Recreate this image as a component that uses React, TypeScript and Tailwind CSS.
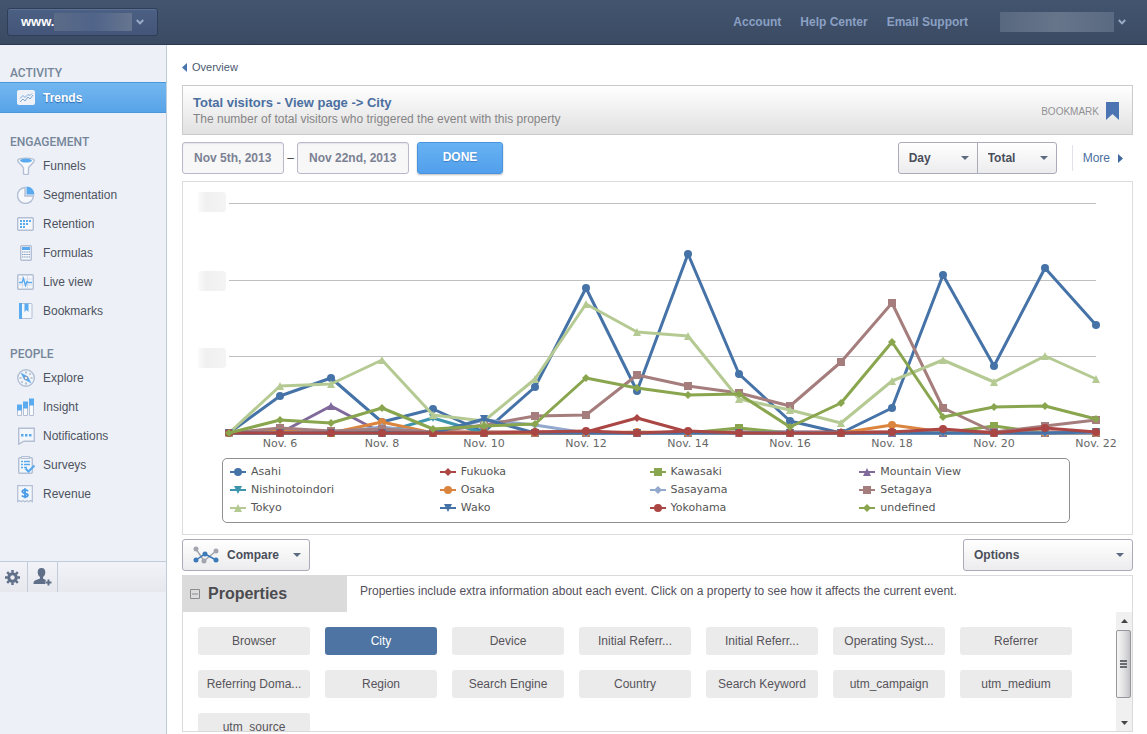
import React, { useState } from 'react'
import clsx from 'clsx'

type MarkerShape = 'circle' | 'diamond' | 'square' | 'triangle' | 'triangle-down'

interface Series {
  name: string
  color: string
  marker: MarkerShape
  values: number[]
}

const BASELINE = 251
const START_X = 46
const STEP_X = 51
const BLUE = '#4572A7'
const RED = '#AA4643'
const GREEN = '#89A54E'

const SERIES: Series[] = [
  { name: 'Asahi', color: BLUE, marker: 'circle', values: [0, 37, 55, 11, 24, 1, 46, 145, 42, 179, 59, 12, 0, 25, 158, 67, 165, 108] },
  { name: 'Fukuoka', color: RED, marker: 'diamond', values: [0, 1, 1, 1, 1, 1, 1, 1, 15, 1, 1, 1, 1, 1, 1, 1, 1, 1] },
  { name: 'Kawasaki', color: GREEN, marker: 'square', values: [0, 0, 0, 0, 0, 0, 0, 0, 0, 0, 5, 0, 0, 0, 0, 7, 0, 0] },
  { name: 'Mountain View', color: '#80699B', marker: 'triangle', values: [0, 0, 27, 0, 0, 0, 0, 0, 0, 0, 0, 0, 0, 0, 0, 0, 0, 0] },
  { name: 'Nishinotoindori', color: '#3D96AE', marker: 'triangle-down', values: [0, 0, 0, 0, 15, 0, 0, 0, 0, 0, 0, 0, 0, 0, 0, 0, 0, 0] },
  { name: 'Osaka', color: '#DB843D', marker: 'circle', values: [0, 2, 0, 11, 0, 0, 0, 0, 1, 0, 0, 0, 0, 8, 1, 0, 0, 0] },
  { name: 'Sasayama', color: '#92A8CD', marker: 'diamond', values: [0, 0, 0, 6, 0, 13, 8, 0, 0, 0, 0, 1, 0, 0, 0, 0, 0, 0] },
  { name: 'Setagaya', color: '#A47D7C', marker: 'square', values: [0, 5, 2, 4, 1, 8, 17, 18, 58, 47, 40, 27, 71, 130, 25, 1, 7, 13] },
  { name: 'Tokyo', color: '#B5CA92', marker: 'triangle', values: [0, 47, 49, 73, 18, 12, 54, 129, 101, 97, 34, 23, 10, 52, 73, 51, 77, 54] },
  { name: 'Wako', color: BLUE, marker: 'triangle-down', values: [0, 0, 0, 0, 0, 14, 0, 0, 0, 0, 0, 0, 0, 0, 0, 0, 0, 1] },
  { name: 'Yokohama', color: RED, marker: 'circle', values: [0, 0, 0, 0, 0, 0, 1, 2, 0, 2, 0, 0, 0, 1, 4, 0, 5, 1] },
  { name: 'undefined', color: GREEN, marker: 'diamond', values: [0, 13, 10, 25, 4, 7, 9, 55, 45, 38, 39, 6, 30, 91, 16, 26, 27, 14] },
]

const DAYS = ['Nov. 6', 'Nov. 8', 'Nov. 10', 'Nov. 12', 'Nov. 14', 'Nov. 16', 'Nov. 18', 'Nov. 20', 'Nov. 22']

const GRID = [
  { line: 22, label: 10 },
  { line: 99, label: 89 },
  { line: 175, label: 166 },
]

const PROPERTIES = [
  'Browser',
  'City',
  'Device',
  'Initial Referr...',
  'Initial Referr...',
  'Operating Syst...',
  'Referrer',
  'Referring Doma...',
  'Region',
  'Search Engine',
  'Country',
  'Search Keyword',
  'utm_campaign',
  'utm_medium',
  'utm_source',
]

function Marker({ shape, x, y, color }: { shape: MarkerShape; x: number; y: number; color: string }) {
  const p = (dx: number, dy: number) => `${x + dx},${y + dy}`
  switch (shape) {
    case 'circle':
      return <circle cx={x} cy={y} r="4" fill={color} />
    case 'square':
      return <rect x={x - 4} y={y - 4} width="8" height="8" fill={color} />
    case 'diamond':
      return <polygon points={[p(0, -4), p(4, 0), p(0, 4), p(-4, 0)].join(' ')} fill={color} />
    case 'triangle':
      return <polygon points={[p(0, -4), p(4, 4), p(-4, 4)].join(' ')} fill={color} />
    default:
      return <polygon points={[p(-4, -4), p(4, -4), p(0, 4)].join(' ')} fill={color} />
  }
}

function Caret() {
  return (
    <svg className="pointer-events-none h-1 w-2 shrink-0" viewBox="0 0 8 4">
      <path d="M0 0h8L4 4z" fill="#5d6b80" />
    </svg>
  )
}

function Chevron() {
  return (
    <svg className="h-[6px] w-2" viewBox="0 0 8 6">
      <path d="M0.8 1 4 4.4 7.2 1" fill="none" stroke="#9aabc6" strokeWidth="2" />
    </svg>
  )
}

/* Sidebar icons */

const LINE = '#b3bfd4'
const ACCENT = '#5aaaf0'

function TrendsIcon() {
  return (
    <>
      <rect x="0" y="1" width="18" height="15" rx="2" fill="#eef2f8" />
      <path d="M3 13l3-3 2 2 3-4 2 2 3-4M3 9.500l3-3 2 2 3-3 2 1 2-2" fill="none" stroke="#7fa9d8" />
    </>
  )
}

function FunnelIcon() {
  return (
    <>
      <path d="M.7 3.500C.7.3 17.300.3 17.300 3.500c0 2.500-5.300 5-5.800 7.500v5.500c0 1.500-5 1.500-5 0V11C6 8.500.7 6 .7 3.500z" fill="#f8fafd" stroke={LINE} strokeWidth="1.400" />
      <ellipse cx="9" cy="3.600" rx="6" ry="2" fill={ACCENT} />
    </>
  )
}

function SegmentationIcon() {
  return (
    <>
      <path d="M8 1.500A8 8 0 1 0 16.500 10H8z" fill="#f6f8fc" stroke={LINE} strokeWidth="1.400" />
      <path d="M9.500 0.500A8 8 0 0 1 17.500 8.500h-8z" fill={ACCENT} />
    </>
  )
}

function RetentionIcon() {
  const rows = [
    [3, 6, 9, 12],
    [3, 6, 9],
    [3, 6],
  ]
  return (
    <>
      <rect x=".7" y="2.700" width="15.600" height="12.600" rx="1" fill="#f6f8fc" stroke={LINE} strokeWidth="1.400" />
      {rows.map((row, i) => row.map((x) => <rect key={x} x={x} y={5 + i * 3} width="2" height="2" fill={ACCENT} />))}
    </>
  )
}

function FormulasIcon() {
  return (
    <>
      <rect x="3.700" y="1.700" width="10.600" height="14.600" rx="1" fill="#f6f8fc" stroke={LINE} strokeWidth="1.400" />
      <rect x="5" y="3" width="8" height="3" fill={ACCENT} />
      <path d="M5 8h8M5 10.500h8M5 13h8" stroke="#8198ba" strokeWidth="1.200" strokeDasharray="1.500 .66" />
    </>
  )
}

function LiveIcon() {
  return (
    <>
      <rect x=".7" y="1.700" width="15.600" height="14.600" rx="1" fill="#f6f8fc" stroke={LINE} strokeWidth="1.400" />
      <path d="M5.500 2v14M10.500 2v14M1 6h15M1 12h15" stroke="#d5dce8" strokeWidth="1" />
      <path d="M2 9.500h3l1.500-4 2 7 1.500-4 1 1h4" fill="none" stroke={ACCENT} strokeWidth="1.400" />
    </>
  )
}

function BookmarksIcon() {
  return (
    <>
      <rect x="3" y="1.500" width="12" height="15" rx="1" fill="#f3f6fb" stroke={LINE} />
      <path d="M2 1h3v16H2z" fill={ACCENT} />
      <path d="M7.500 1.500h4V10l-2-2-2 2z" fill={ACCENT} />
    </>
  )
}

function ExploreIcon() {
  return (
    <>
      <circle cx="9" cy="9" r="8.300" fill="#f1f4f9" stroke={LINE} strokeWidth="1.400" />
      <path d="M9 2.500v2M9 13.500v2M2.500 9h2M13.500 9h2M13.500 4.500l-1 1M4.500 13.500l1-1" stroke="#8a9ab3" strokeWidth="1.200" />
      <path d="M3.500 3.500 11 7.500l3.500 7L7 10.500z" fill={ACCENT} />
      <circle cx="9" cy="9" r="1.600" fill="#f6f8fc" stroke="#8a9ab3" />
    </>
  )
}

function InsightIcon() {
  return (
    <>
      <path d="M.5 11.500h4v6h-4zM6.500 8.500h4v9h-4zM12.500 6.500h4v11h-4z" fill="#f8fafd" stroke={LINE} />
      <path d="M0 6.500h5v6H0zM6 3.500h5v7H6zM12 0.500h5v7h-5z" fill={ACCENT} />
    </>
  )
}

function NotificationsIcon() {
  return (
    <>
      <path d="M1.700 1.200h15.600v13H7l-5.300 3z" fill="#f3f6fb" stroke={LINE} strokeWidth="1.400" />
      <path d="M4 7h2.500v2.500H4zM8 7h2.500v2.500H8zM12 7h2.500v2.500H12z" fill={ACCENT} />
    </>
  )
}

function SurveysIcon() {
  return (
    <>
      <rect x="1.700" y="1.700" width="13.600" height="15.600" rx="1" fill="#f3f6fb" stroke={LINE} strokeWidth="1.400" />
      <path d="M4.500 0.500h8v2h-8z" fill="#e8edf5" stroke={LINE} />
      <path d="M4 5.500h2M4 8.500h2M4 11.500h2M7 5.500h6M7 8.500h6M7 11.500h3" stroke={ACCENT} strokeWidth="1.600" />
      <path d="M8.500 12.500l3 3 6-6" fill="none" stroke={ACCENT} strokeWidth="2.200" />
    </>
  )
}

function RevenueIcon() {
  return (
    <>
      <path d="M.7.7h14.600v16l-1.800-1.200-1.800 1.200-1.800-1.200L8 16.700l-1.800-1.200-1.800 1.200-1.800-1.200-1.900 1.200z" fill="#f3f6fb" stroke={LINE} strokeWidth="1.200" />
      <path d="M11 6.200C10 4.600 5.300 4.400 5.300 6.600s5.600 1.200 5.600 3.500-4.800 2.200-6 .4M8 3.300v10" fill="none" stroke="#4b9be6" strokeWidth="1.800" />
    </>
  )
}

const NAV = [
  { title: 'ACTIVITY', items: [{ label: 'Trends', icon: TrendsIcon, active: true }] },
  {
    title: 'ENGAGEMENT',
    items: [
      { label: 'Funnels', icon: FunnelIcon },
      { label: 'Segmentation', icon: SegmentationIcon },
      { label: 'Retention', icon: RetentionIcon },
      { label: 'Formulas', icon: FormulasIcon },
      { label: 'Live view', icon: LiveIcon },
      { label: 'Bookmarks', icon: BookmarksIcon },
    ],
  },
  {
    title: 'PEOPLE',
    items: [
      { label: 'Explore', icon: ExploreIcon },
      { label: 'Insight', icon: InsightIcon },
      { label: 'Notifications', icon: NotificationsIcon },
      { label: 'Surveys', icon: SurveysIcon },
      { label: 'Revenue', icon: RevenueIcon },
    ],
  },
]

function Header() {
  return (
    <header className="flex h-[45px] items-center justify-between border-b border-[#2b3950] bg-linear-to-b from-[#43556f] to-[#3b4a63] pr-[21px] pb-px pl-[7px] text-xs font-bold">
      <button className="flex h-7 w-[151px] items-center rounded-[3px] border border-[#2f3e57] bg-linear-to-b from-[#4c6084] to-[#43567a] pl-[13px] text-[13px] text-white shadow-[inset_0_1px_0_#5c7095]">
        www.
        <span className="mr-1 h-[18px] w-[78px] bg-linear-to-r from-[#5b6b87] via-[#50648a] to-[#66758f]" />
        <Chevron />
      </button>
      <nav className="flex items-center text-[#8ba0c4]">
        <a href="#account" className="mr-[19px]">Account</a>
        <a href="#help" className="mr-[19px]">Help Center</a>
        <a href="#support" className="mr-8">Email Support</a>
        <button className="flex items-center gap-1" aria-label="User menu">
          <span className="h-5 w-[114px] bg-linear-to-r from-[#58687f] via-[#66758a] to-[#5a6a82]" />
          <Chevron />
        </button>
      </nav>
    </header>
  )
}

function Sidebar() {
  return (
    <aside className="w-[167px] shrink-0 border-r border-[#c0cddd] bg-[#edf1f7]">
      <div className="-mt-px pb-[53px]">
        {NAV.map((section) => (
          <section key={section.title} className="pt-5">
            <h2 className="pl-[10px] font-['Roboto',sans-serif] text-xs leading-[18px] font-medium text-[#75859a]">
              {section.title}
            </h2>
            <ul>
              {section.items.map(({ label, icon: Icon, ...rest }) => {
                const active = 'active' in rest
                return (
                  <li key={label}>
                    <a
                      href={`#${label}`}
                      className={clsx(
                        'flex items-center gap-2 pl-[17px] text-xs',
                        active
                          ? 'h-[31px] border-y border-[#4a97dc] bg-linear-to-b from-[#73b7ef] to-[#57a3e8] font-bold text-white [text-shadow:0_1px_1px_#2c68b0]'
                          : 'h-[29px] text-[#4d5260]',
                      )}
                    >
                      <svg className="size-[18px]" viewBox="0 0 18 18">
                        <Icon />
                      </svg>
                      {label}
                    </a>
                  </li>
                )
              })}
            </ul>
          </section>
        ))}
      </div>
      <div className="flex h-[31px] border-t border-[#c0cddd] bg-linear-to-b from-[#f1f3f8] to-[#e6e8ee]">
        <button className="flex w-7 items-center justify-center border-r border-[#c0cddd] pr-[3px]" aria-label="Settings">
          <svg className="size-[15px]" viewBox="0 0 16 16">
            <circle cx="8" cy="8" r="4" fill="none" stroke="#5f6f88" strokeWidth="3.200" />
            <path d="M8 0v3M8 13v3M0 8h3M13 8h3M2.300 2.300l2.200 2.200M11.500 11.500l2.200 2.200M13.700 2.300l-2.200 2.200M4.500 11.500l-2.200 2.200" stroke="#5f6f88" strokeWidth="2.600" />
          </svg>
        </button>
        <button className="flex w-[30px] items-center justify-center border-r border-[#c0cddd]" aria-label="Invite user">
          <svg className="h-[18px] w-5" viewBox="0 0 20 18">
            <path d="M8.500 0C5.800 0 4.500 1.800 4.700 4.500c.1 2 1 3.500 2.300 4.500v1.600L2 12.400C.9 12.900.5 14 .5 16h12v-3h1.200v-.6L10 10.600V9c1.300-1 2.200-2.500 2.300-4.500C12.500 1.800 11.200 0 8.500 0z" fill="#5f6f88" />
            <path d="M15.500 11.500v6M12.500 14.500h6" stroke="#eef0f5" strokeWidth="4" />
            <path d="M15.500 11.500v6M12.500 14.500h6" stroke="#5f6f88" strokeWidth="2" />
          </svg>
        </button>
      </div>
    </aside>
  )
}

function Dropdown({ label, className }: { label: string; className: string }) {
  return (
    <div className={clsx('relative flex h-8 items-center justify-end border border-[#a9abb8] bg-linear-to-b from-white to-[#ececee] pr-2', className)}>
      <select
        aria-label={label}
        className="absolute inset-0 w-full appearance-none bg-transparent pb-px pl-[10px] text-xs font-bold text-[#4a4e5a]"
      >
        <option>{label}</option>
      </select>
      <Caret />
    </div>
  )
}

function Toolbar() {
  const dateClass =
    'h-8 rounded-[3px] border border-[#b9b9cc] bg-[#f7f7f8] px-[11px] text-xs font-bold text-[#7b8193] shadow-[inset_0_1px_1px_#e4e4ea]'
  return (
    <div className="mt-[7px] flex items-center">
      <input className={clsx(dateClass, 'w-[102px]')} defaultValue="Nov 5th, 2013" aria-label="From date" />
      <span className="w-[13px] text-center text-xs text-[#444]">–</span>
      <input className={clsx(dateClass, 'w-[112px]')} defaultValue="Nov 22nd, 2013" aria-label="To date" />
      <button className="ml-2 h-8 w-[86px] rounded-[3px] border border-[#4a94dd] bg-linear-to-b from-[#67b2f2] to-[#529fec] pb-[3px] text-xs font-bold text-white shadow-[0_1px_2px_#bbb] [text-shadow:0_1px_1px_#3d80c8]">
        DONE
      </button>
      <Dropdown label="Day" className="ml-auto w-20 rounded-l-[3px]" />
      <Dropdown label="Total" className="-ml-px w-20 rounded-r-[3px]" />
      <a href="#more" className="ml-[15px] flex h-[26px] items-center gap-2 border-l border-[#e2e2e8] pr-[10px] pl-[10px] text-xs text-[#4b6f9f]">
        More
        <svg className="h-[9px] w-[5px]" viewBox="0 0 5 9">
          <path d="M0 0l5 4.500L0 9z" fill="#41699f" />
        </svg>
      </a>
    </div>
  )
}

function Chart() {
  return (
    <section className="mt-[7px] border border-[#dcdcdc] pb-[11px]">
      <svg className="block w-full" viewBox="0 0 949 276">
        <defs>
          <linearGradient id="axisLabel" x1="0" x2="1">
            <stop offset="0" stopColor="#fafafa" />
            <stop offset=".3" stopColor="#f0f0f0" />
            <stop offset="1" stopColor="#f4f4f4" />
          </linearGradient>
        </defs>
        {GRID.map(({ line, label }) => (
          <g key={line}>
            <rect x="15" y={label} width="28" height="20" rx="3" fill="url(#axisLabel)" />
            <path d={`M46 ${line - 0.5}H913`} stroke="#c0c0c0" />
          </g>
        ))}
        {DAYS.map((day, i) => (
          <text
            key={day}
            x={START_X + STEP_X * (2 * i + 1)}
            y="265"
            textAnchor="middle"
            fill="#666"
            className="font-['DejaVu_Sans',sans-serif] text-[11px]"
          >
            {day}
          </text>
        ))}
        {SERIES.map((s) => (
          <g key={s.name}>
            <polyline
              points={s.values.map((v, i) => `${START_X + STEP_X * i},${BASELINE - v}`).join(' ')}
              fill="none"
              stroke={s.color}
              strokeWidth="3"
              strokeLinejoin="round"
            />
            {s.values.map((v, i) => (
              <Marker key={i} shape={s.marker} x={START_X + STEP_X * i} y={BASELINE - v} color={s.color} />
            ))}
          </g>
        ))}
      </svg>
      <ul className="mr-[62px] ml-[39px] grid grid-cols-4 rounded-[5px] border border-[#909090] pt-1 pb-[5px] pl-[7px] font-['DejaVu_Sans',sans-serif] text-[11px] leading-[18px] text-[#555]">
        {SERIES.map((s) => (
          <li key={s.name} className="flex items-center gap-[5px]">
            <svg className="h-2 w-4" viewBox="0 0 16 8">
              <path d="M0 4h16" stroke={s.color} strokeWidth="2" />
              <Marker shape={s.marker} x={8} y={4} color={s.color} />
            </svg>
            {s.name}
          </li>
        ))}
      </ul>
    </section>
  )
}

function Scrollbar() {
  return (
    <div className="flex w-4 shrink-0 flex-col bg-[#f0f0f1]">
      <button className="flex h-[18px] items-center justify-center" aria-label="Scroll up">
        <svg className="h-1 w-[7px]" viewBox="0 0 7 4">
          <path d="M0 4h7L3.500 0z" fill="#444" />
        </svg>
      </button>
      <div className="flex h-[68px] w-[15px] flex-col items-center justify-center gap-px rounded-[2px] border border-[#97979b] bg-linear-to-r from-[#f6f6f6] via-[#e2e2e4] to-[#c4c4c8]">
        <span className="h-0.5 w-[7px] bg-[#6a6a72]" />
        <span className="h-0.5 w-[7px] bg-[#6a6a72]" />
        <span className="h-0.5 w-[7px] bg-[#6a6a72]" />
      </div>
      <button className="mt-auto flex h-[17px] items-center justify-center" aria-label="Scroll down">
        <svg className="h-1 w-[7px]" viewBox="0 0 7 4">
          <path d="M0 0h7L3.500 4z" fill="#444" />
        </svg>
      </button>
    </div>
  )
}

function Properties() {
  const [selected, setSelected] = useState(1)
  return (
    <section className="mt-1 border border-[#dadada]">
      <div className="flex">
        <h2 className="-mt-px -ml-px flex h-[37px] w-[165px] items-center gap-2 bg-[#dbdbdb] pl-2 text-base font-bold text-[#4c4c50]">
          <svg className="size-[10px]" viewBox="0 0 10 10">
            <path d="M.5.5h9v9h-9zM2 5h6" fill="none" stroke="#8c8c90" />
          </svg>
          Properties
        </h2>
        <p className="pt-[7px] pl-[13px] text-xs text-[#54505c]">
          Properties include extra information about each event. Click on a property to see how it affects the current event.
        </p>
      </div>
      <div className="flex h-[119px]">
        <div className="flex flex-1 flex-wrap content-start gap-[15px] overflow-hidden pt-[15px] pl-[15px]">
          {PROPERTIES.map((name, i) => (
            <button
              key={i}
              onClick={() => setSelected(i)}
              className={clsx(
                'h-7 w-28 rounded-[3px] text-xs',
                i === selected ? 'bg-[#4d74a3] text-white' : 'bg-[#ebebeb] text-[#56545a]',
              )}
            >
              {name}
            </button>
          ))}
        </div>
        <Scrollbar />
      </div>
    </section>
  )
}

export default function App() {
  return (
    <div className="flex min-h-screen flex-col bg-white font-['Liberation_Sans',Arial,sans-serif]">
      <Header />
      <div className="flex flex-1">
        <Sidebar />
        <main className="min-w-0 flex-1 pt-[13px] pr-[14px] pb-0.5 pl-[15px]">
          <a href="#overview" className="flex h-[18px] items-center gap-[5px] text-[11px] text-[#4a5870]">
            <svg className="h-[9px] w-[5px]" viewBox="0 0 5 9">
              <path d="M5 0v9L0 4.500z" fill="#4a74b0" />
            </svg>
            Overview
          </a>

          <div className="mt-[9px] flex h-[50px] items-center justify-between border border-[#cbcbcb] bg-linear-to-b from-white to-[#e1e1e1] pt-0.5 pr-[13px] pl-[10px]">
            <div>
              <h1 className="text-[13px] leading-4 font-bold text-[#4b6fa0]">Total visitors - View page -&gt; City</h1>
              <p className="text-xs leading-4 text-[#858585]">The number of total visitors who triggered the event with this property</p>
            </div>
            <button className="flex items-center gap-[7px] text-[10px] text-[#919196]">
              BOOKMARK
              <svg className="h-[18px] w-[13px]" viewBox="0 0 13 18">
                <path d="M0 0h13v18l-6.500-6L0 18z" fill="#4c74b3" />
              </svg>
            </button>
          </div>

          <Toolbar />
          <Chart />

          <div className="mt-1 flex justify-between">
            <button className="flex h-8 w-32 items-center rounded-[3px] border border-[#a9abb8] bg-linear-to-b from-white to-[#ececee] pr-2 pl-[10px] text-xs font-bold text-[#4a4e5a]">
              <svg className="mr-2 h-[18px] w-[26px]" viewBox="0 0 26 18">
                <path d="M3 3l8 12L23 5" fill="none" stroke="#a2a5ad" strokeWidth="1.500" />
                <path d="M3 14l9-6 11 6" fill="none" stroke="#3d7ab8" strokeWidth="1.500" />
                <path d="M.5 3a2.500 2.500 0 1 0 5 0 2.500 2.500 0 1 0-5 0M8.500 15a2.500 2.500 0 1 0 5 0 2.500 2.500 0 1 0-5 0M20.500 5a2.500 2.500 0 1 0 5 0 2.500 2.500 0 1 0-5 0" fill="#a2a5ad" />
                <path d="M.5 14a2.500 2.500 0 1 0 5 0 2.500 2.500 0 1 0-5 0M9.500 8a2.500 2.500 0 1 0 5 0 2.500 2.500 0 1 0-5 0M20.500 14a2.500 2.500 0 1 0 5 0 2.500 2.500 0 1 0-5 0" fill="#3d7ab8" />
              </svg>
              <span className="flex-1 text-left">Compare</span>
              <Caret />
            </button>
            <Dropdown label="Options" className="w-[170px] rounded-[3px]" />
          </div>

          <Properties />
        </main>
      </div>
    </div>
  )
}
